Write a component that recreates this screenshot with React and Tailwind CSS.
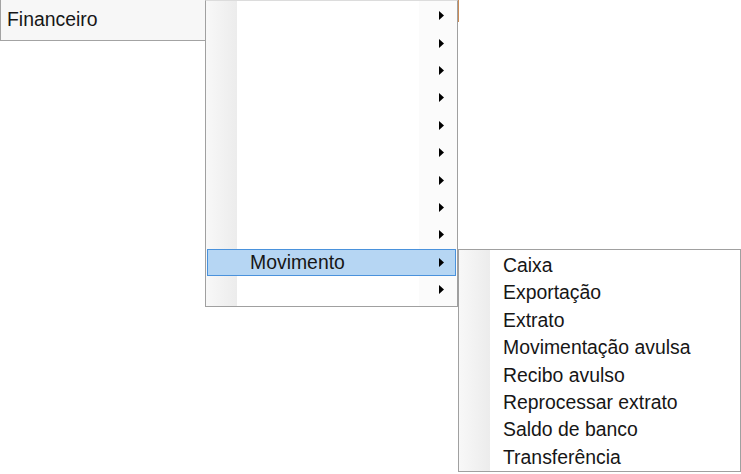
import React from "react";

const font = { fontFamily: '"Liberation Sans", Arial, sans-serif' };

function Arrow() {
  return (
    <svg width="5" height="9" viewBox="0 0 5 9" className="block">
      <path d="M0 0 L5 4.5 L0 9 Z" fill="#000" />
    </svg>
  );
}

const subItems = [
  "Caixa",
  "Exportação",
  "Extrato",
  "Movimentação avulsa",
  "Recibo avulso",
  "Reprocessar extrato",
  "Saldo de banco",
  "Transferência",
];

export default function App() {
  const rows = Array.from({ length: 11 }, (_, i) => i);
  return (
    <div
      className="w-[741px] h-[474px] bg-white overflow-hidden flex items-start text-[19.4px] text-[#161616]"
      style={font}
    >
      {/* Top menubar item */}
      <div className="w-[205px] h-[41px] shrink-0 bg-[#f7f7f7] border-l border-b border-[#a3a3a3] flex items-center pl-[6px] pb-[1px]">
        <span className="leading-none">Financeiro</span>
      </div>

      {/* Second level menu */}
      <div className="relative w-[253px] h-[307px] shrink-0 bg-white border-l border-r border-b border-t border-l-[#a0a0a0] border-r-[#a0a0a0] border-b-[#a0a0a0] border-t-[#dcdcdc]">
        <div className="absolute left-0 top-0 bottom-0 w-[31px] bg-gradient-to-r from-[#f8f8f8] to-[#ececec]" />
        <div className="absolute right-0 top-0 bottom-0 w-[38px] bg-[#fbfbfb]" />
        <div className="absolute -right-[2px] -top-[1px] h-[22px] w-[1px] bg-[#c98a55]" />
        <div className="relative flex flex-col pt-[1px]">
          {rows.map((i) => {
            const active = i === 9;
            return (
              <div
                key={i}
                className={
                  "h-[27.4px] mx-[1px] flex items-center justify-between pl-[42px] pr-[11px] " +
                  (active ? "bg-[#b6d6f3] border border-[#4a92dc]" : "border border-transparent")
                }
              >
                <span className="leading-none">{active ? "Movimento" : ""}</span>
                <Arrow />
              </div>
            );
          })}
        </div>
      </div>

      {/* Third level submenu */}
      <div className="relative mt-[249px] w-[283px] h-[223px] shrink-0 bg-white border border-[#a0a0a0]">
        <div className="absolute left-0 top-0 bottom-0 w-[31px] bg-gradient-to-r from-[#f8f8f8] to-[#ececec]" />
        <div className="relative flex flex-col pt-[2px]">
          {subItems.map((t) => (
            <div key={t} className="h-[27.4px] flex items-center pl-[44px]">
              <span className="leading-none">{t}</span>
            </div>
          ))}
        </div>
      </div>
    </div>
  );
}
